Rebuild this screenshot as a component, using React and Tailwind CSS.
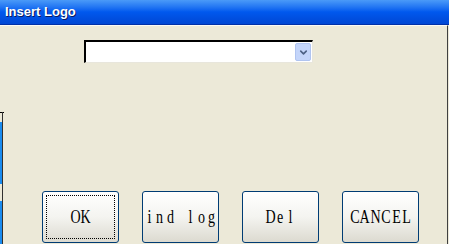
import { ChevronDown } from "lucide-react";

const buttons = [
  { label: "OK", focused: true },
  { label: "ind log" },
  { label: "Del" },
  { label: "CANCEL" },
];

// serif glyphs laid in fixed cells, like the dialog's monospaced system font
function MonoText({ text }) {
  return (
    <span className="flex whitespace-nowrap text-[18px] leading-none font-['Liberation_Serif','Times_New_Roman',serif]">
      {text.split("").map((ch, i) => (
        <span key={i} className="w-[10.4px] flex justify-center overflow-visible">
          <span className="inline-block scale-x-[0.78]">{ch === " " ? "\u00a0" : ch}</span>
        </span>
      ))}
    </span>
  );
}

function DlgButton({ label, focused }) {
  return (
    <button className="relative w-[77px] h-[52px] rounded-[3px] border border-[#003c74] bg-gradient-to-b from-[#ffffff] via-[#f4f4f0] to-[#dcdad0] overflow-hidden flex items-center justify-center text-black">
      {focused && (
        <span className="absolute inset-[3px] border border-dotted border-black" />
      )}
      <MonoText text={label} />
    </button>
  );
}

export default function App() {
  return (
    <div className="w-[449px] h-[244px] flex flex-col bg-[#ece9d8] overflow-hidden">
      {/* Title bar */}
      <div className="h-[25px] flex items-center pl-[5px] bg-gradient-to-b from-[#4a9af8] via-[#0058ee] to-[#0047d4] border-b border-[#0030a8]">
        <span className="text-white font-bold text-[13px] font-['Liberation_Sans',Arial,sans-serif] [text-shadow:1px_1px_0_#0a1a60]">
          Insert Logo
        </span>
      </div>

      {/* Body */}
      <div className="relative flex-1 flex flex-col justify-between border-r border-[#404040] mr-[1px] border-t border-t-[#fbfaf5]">
        <div className="pt-[14px] pl-[84px]">
          <div className="w-[229px] h-[23px] bg-white border-t-2 border-l-2 border-t-black border-l-black border-r border-b border-r-[#e8e6dc] border-b-[#e8e6dc] flex justify-end items-stretch p-[1px]">
            <div className="w-[16px] bg-[#c4d5fa] border border-[#b0c4f0] rounded-[2px] flex items-center justify-center">
              <ChevronDown className="w-[11px] h-[11px] text-[#4d6185]" strokeWidth={3.5} />
            </div>
          </div>
        </div>

        <div className="flex gap-[23px] pl-[42px] mb-[1px]">
          {buttons.map((b) => (
            <DlgButton key={b.label} label={b.label} focused={b.focused} />
          ))}
        </div>

        {/* edges of the window behind */}
        <div className="absolute left-0 top-[86px] w-[4px] h-[1px] bg-black" />
        <div className="absolute left-[2px] top-[86px] w-[1px] bottom-0 bg-[#303030]" />
        <div className="absolute left-0 top-[96px] w-[2px] h-[62px] bg-[#1a8cf0]" />
        <div className="absolute left-0 top-[175px] w-[2px] bottom-0 bg-[#1a8cf0]" />
      </div>
    </div>
  );
}
